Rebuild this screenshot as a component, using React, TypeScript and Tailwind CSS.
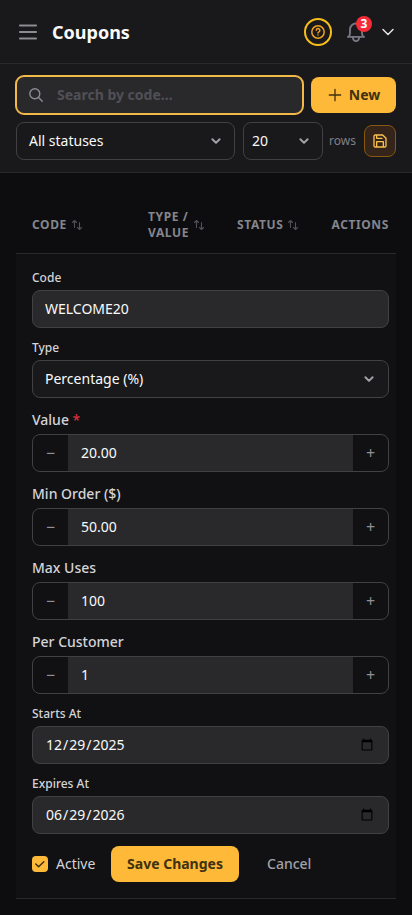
import React from "react";

const SANS = "font-['Noto_Sans',sans-serif]";
const BOX = "h-[38px] w-full rounded-lg border border-[#414144]";

function Chevron({ className }: { className: string }) {
  return (
    <svg viewBox="0 0 24 24" fill="none" stroke="currentColor" className={className}>
      <path d="m6 9 6 6 6-6" strokeLinecap="round" strokeLinejoin="round" />
    </svg>
  );
}

function SmallChevron() {
  return (
    <svg viewBox="0 0 16 16" fill="none" stroke="#a1a1a6" strokeWidth="2" strokeLinecap="round" strokeLinejoin="round" className="h-4 w-4">
      <path d="m4.400 6.300 3.600 3.600 3.600-3.600" />
    </svg>
  );
}

function SortIcon() {
  return (
    <svg viewBox="0 0 12 12" fill="none" stroke="currentColor" strokeWidth="1.1" strokeLinecap="round" strokeLinejoin="round" className="h-3 w-3 shrink-0 text-[#505056]">
      <path d="M3.500 8.500v-7M1.500 3.500l2-2 2 2M8.500 3.500v7M6.500 8.500l2 2 2-2" />
    </svg>
  );
}

function Header() {
  return (
    <header className="flex h-16 items-center border-b border-[#29292c] bg-[#19191b] px-4">
      <svg viewBox="0 0 24 24" fill="none" stroke="#8b8b90" strokeWidth="1.9" strokeLinecap="round" className="h-6 w-6">
        <path d="M3.900 5.500h16.200M3.900 12h16.200M3.900 18.500h16.200" />
      </svg>
      <h1 className="ml-3 text-lg font-bold text-[#fafafa]">Coupons</h1>
      <button className="ml-auto flex h-7 w-7 items-center justify-center rounded-full border-2 border-[#f8bf18] text-[#f0a020]">
        <svg viewBox="0 0 16 16" fill="none" stroke="currentColor" strokeWidth="1.5" strokeLinecap="round" strokeLinejoin="round" className="h-4 w-4">
          <circle cx="8" cy="8" r="6.2" />
          <path d="M6.300 6.300a1.750 1.750 0 1 1 2.600 1.500c-.6.3-.9.6-.9 1.200M8 10.900v.1" />
        </svg>
      </button>
      <button className="relative ml-3 h-6 w-6 text-[#777784]">
        <svg viewBox="0 0 24 24" fill="none" stroke="currentColor" strokeWidth="1.9" strokeLinecap="round" strokeLinejoin="round" className="h-6 w-6">
          <path d="M3.900 16.900h16.200M4.800 16.500c.8-1 1.200-2 1.200-3.500V9.500a6 6 0 0 1 12 0V13c0 1.500.4 2.500 1.200 3.500M8.900 17.500a3.100 3.600 0 0 0 6.200 0" />
        </svg>
        <span className="absolute -top-1 left-3 flex h-4 w-4 items-center justify-center rounded-full bg-[#f42c38] text-xs font-bold text-white">3</span>
      </button>
      <Chevron className="ml-2.5 -mr-0.5 h-5 w-5 stroke-[1.8] text-[#e4e4e7]" />
    </header>
  );
}

function Toolbar() {
  return (
    <section className="flex flex-col gap-2 border-b border-[#29292c] bg-[#19191b] px-4 py-3">
      <div className="flex items-center gap-2">
        <label className="flex h-[38px] w-[287px] items-center rounded-lg bg-[#29292c] px-3 outline-2 -outline-offset-1 outline-[#f1b84a]">
          <svg viewBox="0 0 16 16" fill="none" stroke="#8b8b92" strokeWidth="1.400" strokeLinecap="round" className="h-4 w-4">
            <circle cx="6.800" cy="6.800" r="5" />
            <path d="m10.500 10.500 3.800 3.800" />
          </svg>
          <input className="ml-[13px] w-[200px] bg-transparent text-sm font-bold outline-none placeholder:text-[#505056]" placeholder="Search by code..." />
        </label>
        <button className="flex h-9 w-[85px] items-center justify-center gap-1.5 rounded-lg bg-[#ffb938] text-sm font-bold text-[#40310f]">
          <svg viewBox="0 0 16 16" fill="none" stroke="currentColor" strokeWidth="1.300" strokeLinecap="round" className="h-4 w-4">
            <path d="M8 2.300v11.400M2.300 8h11.400" />
          </svg>
          New
        </button>
      </div>
      <div className="flex items-center">
        <button className="flex h-[38px] w-[219px] items-center justify-between rounded-lg border border-[#414144] pr-2.5 pl-3 text-sm text-[#fafafa]">
          All statuses
          <SmallChevron />
        </button>
        <button className="ml-2 flex h-[38px] w-20 items-center justify-between rounded-lg border border-[#414144] pr-2.5 pl-2 text-sm text-[#fafafa]">
          20
          <SmallChevron />
        </button>
        <span className="ml-1.5 text-xs text-[#808087]">rows</span>
        <button className="ml-auto flex h-8 w-8 items-center justify-center rounded-lg border border-[#885810] bg-[#34241a] text-[#f9c04e]">
          <svg viewBox="0 0 24 24" fill="none" stroke="currentColor" strokeWidth="2" strokeLinecap="round" strokeLinejoin="round" className="h-4 w-4">
            <path d="M19 21H5a2 2 0 0 1-2-2V5a2 2 0 0 1 2-2h11l5 5v11a2 2 0 0 1-2 2zM17 21v-8H7v8M7 3v5h8" />
          </svg>
        </button>
      </div>
    </section>
  );
}

function Field({ label, children }: { label: string; children: React.ReactNode }) {
  return (
    <div className="flex flex-col gap-1">
      <label className="text-xs font-medium text-[#d4d4d8]">{label}</label>
      {children}
    </div>
  );
}

function Stepper({ label, value, required }: { label: string; value: string; required?: boolean }) {
  return (
    <div className="flex flex-col gap-1">
      <label className="text-sm font-medium text-[#d4d4d8]">
        {label}
        {required && <span className="text-[#d92f3a]"> *</span>}
      </label>
      <div className={`${BOX} flex overflow-hidden text-sm`}>
        <button type="button" className="w-[35px] text-base text-[#909096]">−</button>
        <input className="min-w-0 flex-1 bg-[#29292c] px-[13px] text-[#fafafa] outline-none" defaultValue={value} />
        <button type="button" className="w-[35px] text-base text-[#909096]">+</button>
      </div>
    </div>
  );
}

export default function App() {
  return (
    <div className={`${SANS} h-[915px] w-full overflow-hidden bg-[#0d0d0f]`}>
      <Header />
      <Toolbar />
      <main className="mx-4 mt-[22px]">
        <div className="flex h-[59px] items-center border-b border-[#29292c] pt-0.5 pl-4 text-xs font-bold tracking-[0.6px] text-[#85858d]">
          <div className="flex w-[116px] items-center gap-1">CODE <SortIcon /></div>
          <div className="flex w-[89px] items-center gap-1"><span className="w-[41px]">TYPE / VALUE</span> <SortIcon /></div>
          <div className="flex w-[95px] items-center gap-1">STATUS <SortIcon /></div>
          <div className="-ml-[0.5px]">ACTIONS</div>
        </div>
        <form className="flex flex-col gap-3 border-b border-[#29292c] bg-[#111113] py-4 pr-[7px] pl-4">
          <Field label="Code">
            <input className={`${BOX} bg-[#29292c] px-3 pb-0.5 text-sm text-[#fafafa] outline-none`} defaultValue="WELCOME20" />
          </Field>
          <Field label="Type">
            <button type="button" className={`${BOX} flex items-center justify-between bg-[#19191b] pr-[11px] pl-3 text-sm text-[#fafafa]`}>
              Percentage (%)
              <SmallChevron />
            </button>
          </Field>
          <Stepper label="Value" value="20.00" required />
          <Stepper label="Min Order ($)" value="50.00" />
          <Stepper label="Max Uses" value="100" />
          <Stepper label="Per Customer" value="1" />
          <Field label="Starts At">
            <input type="date" className={`${BOX} bg-[#29292c] px-3 text-sm text-[#fafafa] outline-none`} defaultValue="2025-12-29" />
          </Field>
          <Field label="Expires At">
            <input type="date" className={`${BOX} bg-[#29292c] px-3 text-sm text-[#fafafa] outline-none`} defaultValue="2026-06-29" />
          </Field>
          <div className="flex items-center">
            <span className="flex h-4 w-4 items-center justify-center rounded bg-[#ffb938]">
              <svg viewBox="0 0 16 16" fill="none" stroke="#40310f" strokeWidth="1.500" strokeLinecap="round" strokeLinejoin="round" className="h-4 w-4">
                <path d="m3.800 8 2.800 2.700 5.200-5" />
              </svg>
            </span>
            <span className="ml-2 w-[55px] text-sm text-[#d4d4d8]">Active</span>
            <button type="button" className="h-9 w-32 rounded-lg bg-[#ffb938] text-sm font-bold text-[#40310f]">Save Changes</button>
            <button type="button" className="ml-3 px-4 text-sm font-medium text-[#a1a1a8]">Cancel</button>
          </div>
        </form>
      </main>
    </div>
  );
}
